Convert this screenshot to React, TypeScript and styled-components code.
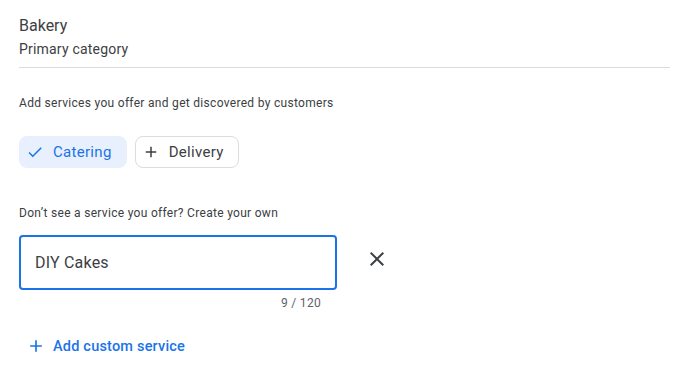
import React from 'react';
import styled, { createGlobalStyle } from 'styled-components';

const GlobalStyle = createGlobalStyle`
  body {
    margin: 0;
    background: #fff;
    font-family: Roboto, "Liberation Sans", sans-serif;
    color: #3c4043;
  }
`;

const CheckIcon = () => (
  <svg width="18" height="18" viewBox="0 0 24 24" fill="#1a73e8">
    <path d="M9 16.17L4.83 12l-1.42 1.41L9 19 21 7l-1.41-1.41z" />
  </svg>
);

const PlusIcon = ({ color, size = 18 }: { color: string; size?: number }) => (
  <svg width={size} height={size} viewBox="0 0 24 24" fill={color}>
    <path d="M19 13h-6v6h-2v-6H5v-2h6V5h2v6h6v2z" />
  </svg>
);

const CloseIcon = () => (
  <svg width="24" height="24" viewBox="0 0 24 24" fill="#3c4043">
    <path d="M19 6.41L17.59 5 12 10.59 6.41 5 5 6.41 10.59 12 5 17.59 6.41 19 12 13.41 17.59 19 19 17.59 13.41 12z" />
  </svg>
);

export default function App() {
  return (
    <Page>
      <GlobalStyle />
      <Category>
        <Title>Bakery</Title>
        <Subtitle>Primary category</Subtitle>
      </Category>
      <Hint gap={27}>Add services you offer and get discovered by customers</Hint>
      <Chips>
        <Chip selected>
          <CheckIcon />
          Catering
        </Chip>
        <Chip>
          <PlusIcon color="#3c4043" />
          Delivery
        </Chip>
      </Chips>
      <Hint gap={37}>Don’t see a service you offer? Create your own</Hint>
      <CustomRow>
        <FieldWrap>
          <Field defaultValue="DIY Cakes" />
          <Counter>9 / 120</Counter>
        </FieldWrap>
        <IconButton aria-label="Remove">
          <CloseIcon />
        </IconButton>
      </CustomRow>
      <AddButton>
        <PlusIcon color="#1a73e8" size={20} />
        Add custom service
      </AddButton>
    </Page>
  );
}

const Page = styled.div`
  padding: 14px 16px 0 19px;
  width: 686px;
  box-sizing: border-box;
`;

const Category = styled.div`
  border-bottom: 1px solid #dadce0;
  padding-bottom: 8px;
`;

const Title = styled.div`
  font-size: 16px;
  line-height: 24px;
  color: #3c4043;
`;

const Subtitle = styled.div`
  font-size: 14px;
  line-height: 20px;
  letter-spacing: 0.2px;
  color: #3c4043;
  margin-top: 1px;
`;

const Hint = styled.div<{ gap: number }>`
  font-size: 12px;
  line-height: 16px;
  color: #3c4043;
  letter-spacing: 0.3px;
  margin-top: ${(p) => p.gap}px;
`;

const Chips = styled.div`
  display: flex;
  gap: 8px;
  margin-top: 25px;
`;

const Chip = styled.button<{ selected?: boolean }>`
  display: flex;
  align-items: center;
  gap: 9px;
  height: 32px;
  box-sizing: border-box;
  padding: 0 14px 0 6px;
  border-radius: 8px;
  font-family: inherit;
  font-size: 15px;
  font-weight: 400;
  letter-spacing: 0.3px;
  cursor: pointer;
  border: 1px solid ${(p) => (p.selected ? '#e8f0fe' : '#dadce0')};
  background: ${(p) => (p.selected ? '#e8f0fe' : '#fff')};
  color: ${(p) => (p.selected ? '#1a73e8' : '#3c4043')};
`;

const CustomRow = styled.div`
  display: flex;
  align-items: flex-start;
  gap: 28px;
  margin-top: 14px;
`;

const FieldWrap = styled.div`
  display: flex;
  flex-direction: column;
  width: 318px;
`;

const Field = styled.input`
  height: 55px;
  box-sizing: border-box;
  border: 2px solid #1a73e8;
  border-radius: 4px;
  padding: 0 14px;
  font-family: inherit;
  font-size: 16px;
  letter-spacing: 0.2px;
  color: #3c4043;
  outline: none;
`;

const Counter = styled.div`
  align-self: flex-end;
  margin-right: 16px;
  margin-top: 5px;
  font-size: 12px;
  line-height: 16px;
  letter-spacing: 0.3px;
  color: #5f6368;
`;

const IconButton = styled.button`
  margin-top: 12px;
  padding: 0;
  border: none;
  background: none;
  display: flex;
  cursor: pointer;
`;

const AddButton = styled.button`
  display: flex;
  align-items: center;
  gap: 7px;
  margin-top: 25px;
  margin-left: 7px;
  padding: 0;
  border: none;
  background: none;
  font-family: inherit;
  font-size: 14.5px;
  font-weight: 500;
  letter-spacing: 0.2px;
  color: #1a73e8;
  cursor: pointer;
`;
